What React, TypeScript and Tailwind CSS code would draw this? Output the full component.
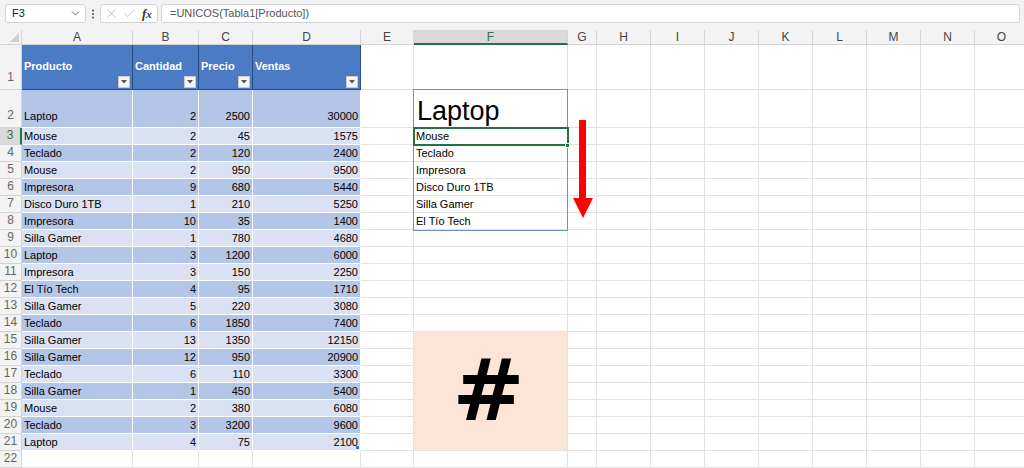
import { X, Check, ChevronDown, EllipsisVertical } from 'lucide-react';

const COLS = ['A', 'B', 'C', 'D', 'E', 'F', 'G', 'H', 'I', 'J', 'K', 'L', 'M', 'N', 'O'];

const HEADERS = ['Producto', 'Cantidad', 'Precio', 'Ventas'];

const DATA: [string, number, number, number][] = [
  ['Laptop', 2, 2500, 30000],
  ['Mouse', 2, 45, 1575],
  ['Teclado', 2, 120, 2400],
  ['Mouse', 2, 950, 9500],
  ['Impresora', 9, 680, 5440],
  ['Disco Duro 1TB', 1, 210, 5250],
  ['Impresora', 10, 35, 1400],
  ['Silla Gamer', 1, 780, 4680],
  ['Laptop', 3, 1200, 6000],
  ['Impresora', 3, 150, 2250],
  ['El Tío Tech', 4, 95, 1710],
  ['Silla Gamer', 5, 220, 3080],
  ['Teclado', 6, 1850, 7400],
  ['Silla Gamer', 13, 1350, 12150],
  ['Silla Gamer', 12, 950, 20900],
  ['Teclado', 6, 110, 3300],
  ['Silla Gamer', 1, 450, 5400],
  ['Mouse', 2, 380, 6080],
  ['Teclado', 3, 3200, 9600],
  ['Laptop', 4, 75, 2100],
];

// resultado de =UNICOS(Tabla1[Producto]) desde F3
const UNIQUE = ['Mouse', 'Teclado', 'Impresora', 'Disco Duro 1TB', 'Silla Gamer', 'El Tío Tech'];

const cellBase = 'border-r border-b flex items-end overflow-hidden whitespace-nowrap text-[11px] leading-[14px]';

function FilterButton() {
  return (
    <div className="absolute right-[2px] bottom-[1px] w-[12px] h-[12px] bg-[#f4f4f4] border border-[#c9c9c9] flex items-center justify-center">
      <svg width="6" height="4" viewBox="0 0 6 4">
        <path d="M0 0 L6 0 L3 3.5 Z" fill="#555" />
      </svg>
    </div>
  );
}

function TableCell({ row, col }: { row: number; col: number }) {
  if (row === 1) {
    return (
      <div className="relative border-r border-b border-r-[#2a4a80] border-b-[#2a4a80] bg-[#4a7bc4] flex items-center overflow-hidden whitespace-nowrap pl-[2px] pb-[2px]">
        <span className="text-white font-bold text-[11px]">{HEADERS[col]}</span>
        <FilterButton />
      </div>
    );
  }
  const rec = DATA[row - 2];
  const band = row % 2 === 0 ? 'bg-[#b4c6e7]' : 'bg-[#d9e1f2]';
  const align = col === 0 ? 'justify-start pl-[2px]' : 'justify-end pr-[2px]';
  const pad = row === 2 ? 'pb-[4px]' : 'pb-[1px]';
  return (
    <div className={`${cellBase} ${pad} border-white ${band} ${align} relative`}>
      {rec[col]}
      {row === 21 && col === 3 && (
        <div className="absolute right-[1px] bottom-[1px] w-[3px] h-[3px] bg-[#3f6fc4]" />
      )}
    </div>
  );
}

function SheetCell({ row, col }: { row: number; col: number }) {
  if (col <= 3 && row <= 21) return <TableCell row={row} col={col} />;

  if (col === 5 && row === 2) {
    return (
      <div className={`${cellBase} border-[#e1e1e1] pl-[3px] pb-[1px]`}>
        <span className="text-[27px] leading-[30px] text-black">Laptop</span>
      </div>
    );
  }
  if (col === 5 && row >= 3 && row <= 8) {
    return <div className={`${cellBase} border-[#e1e1e1] pl-[2px] pb-[1px]`}>{UNIQUE[row - 3]}</div>;
  }
  if (col === 5 && row === 15) {
    return (
      <div className="row-span-7 border-r border-b border-[#e1e1e1] bg-[#fce4d6] flex items-center justify-center">
        <span className="font-['DejaVu_Sans',sans-serif] font-black text-[86px] leading-none text-black -mt-[2px] -ml-[4px]">#</span>
      </div>
    );
  }
  return <div className={`${cellBase} border-[#e1e1e1]`} />;
}

export default function App() {
  const rows = Array.from({ length: 22 }, (_, i) => i + 1);

  return (
    <div className="w-[1024px] h-[468px] overflow-hidden bg-white font-['Liberation_Sans',Arial,sans-serif] text-black select-none">
      {/* barra de fórmulas */}
      <div className="h-[30px] bg-[#f3f3f3] flex items-start pt-[4px]">
        <div className="ml-[5px] w-[81px] h-[19px] bg-white border border-[#d4d4d4] rounded-[3px] flex items-center justify-between pl-[6px] pr-[3px]">
          <span className="text-[11px] text-[#222]">F3</span>
          <ChevronDown size={13} strokeWidth={1.6} className="text-[#555]" />
        </div>
        <div className="w-[14px] h-[19px] flex items-center justify-center">
          <EllipsisVertical size={12} strokeWidth={2.5} className="text-[#666]" />
        </div>
        <div className="w-[58px] h-[19px] bg-white border border-[#d4d4d4] rounded-[3px] flex items-center pl-[3px] gap-[3px]">
          <X size={15} strokeWidth={1} className="text-[#a8a8a8]" />
          <Check size={15} strokeWidth={1} className="text-[#a8a8a8]" />
          <span className="font-['Liberation_Serif',serif] italic font-bold text-[13px] text-[#333] leading-none ml-[2px]">
            f<span className="text-[11px]">x</span>
          </span>
        </div>
        <div className="ml-[3px] flex-1 mr-[4px] h-[19px] bg-white border border-[#d4d4d4] rounded-[3px] flex items-center pl-[8px]">
          <span className="text-[11px] text-[#555]">=UNICOS(Tabla1[Producto])</span>
        </div>
      </div>

      {/* hoja */}
      <div className="relative">
        <div className="grid grid-cols-[22px_111px_66px_54px_108px_53px_154px_29px_54px_54px_54px_54px_54px_54px_54px_54px] grid-rows-[15px_45px_38px_repeat(20,17px)]">
          <div className="bg-[#f3f3f3] border-r border-b border-[#d4d4d4] flex items-end justify-end pr-[2px] pb-[2px]">
            <svg width="9" height="9" viewBox="0 0 9 9">
              <path d="M9 0 L9 9 L0 9 Z" fill="#cfcfcf" />
            </svg>
          </div>
          {COLS.map((c) =>
            c === 'F' ? (
              <div key={c} className="bg-[#d9d9d9] border-r border-[#d4d4d4] border-b-2 border-b-[#217346] flex items-center justify-center text-[12px] text-[#3d6b52]">
                {c}
              </div>
            ) : (
              <div key={c} className="bg-[#f3f3f3] border-r border-b border-[#d4d4d4] flex items-center justify-center text-[12px] text-[#444]">
                {c}
              </div>
            )
          )}

          {rows.map((r) => (
            <Row key={r} row={r} />
          ))}
        </div>

        {/* borde del rango desbordado F2:F8 */}
        <div className="absolute left-[413px] top-[59px] w-[155px] h-[142px] border border-[#6b8fd0] pointer-events-none" />
        {/* celda activa F3 */}
        <div className="absolute left-[413px] top-[97px] w-[156px] h-[19px] border-2 border-[#217346] pointer-events-none" />
        <div className="absolute left-[565px] top-[113px] w-[5px] h-[5px] bg-[#217346] border border-white" />

        {/* flecha roja */}
        <svg className="absolute left-[572px] top-[90px]" width="22" height="100" viewBox="0 0 22 100">
          <rect x="7" y="0" width="7" height="80" fill="#ff0000" />
          <path d="M1 78 L21 78 L11 98 Z" fill="#ff0000" />
        </svg>
      </div>
    </div>
  );
}

function Row({ row }: { row: number }) {
  const selected = row === 3;
  const tall = row <= 2;
  const cells: JSX.Element[] = [];
  COLS.forEach((_, ci) => {
    if (ci === 5 && row >= 16 && row <= 21) return;
    cells.push(<SheetCell key={ci} row={row} col={ci} />);
  });
  return (
    <>
      <div
        className={
          selected
            ? 'bg-[#d9d9d9] border-b border-[#d4d4d4] border-r-2 border-r-[#217346] flex items-end justify-center text-[12px] text-[#3d6b52]'
            : `bg-[#f3f3f3] border-r border-b border-[#d4d4d4] flex items-end justify-center text-[12px] text-[#666] ${tall ? 'pb-[3px]' : ''}`
        }
      >
        {row}
      </div>
      {cells}
    </>
  );
}
